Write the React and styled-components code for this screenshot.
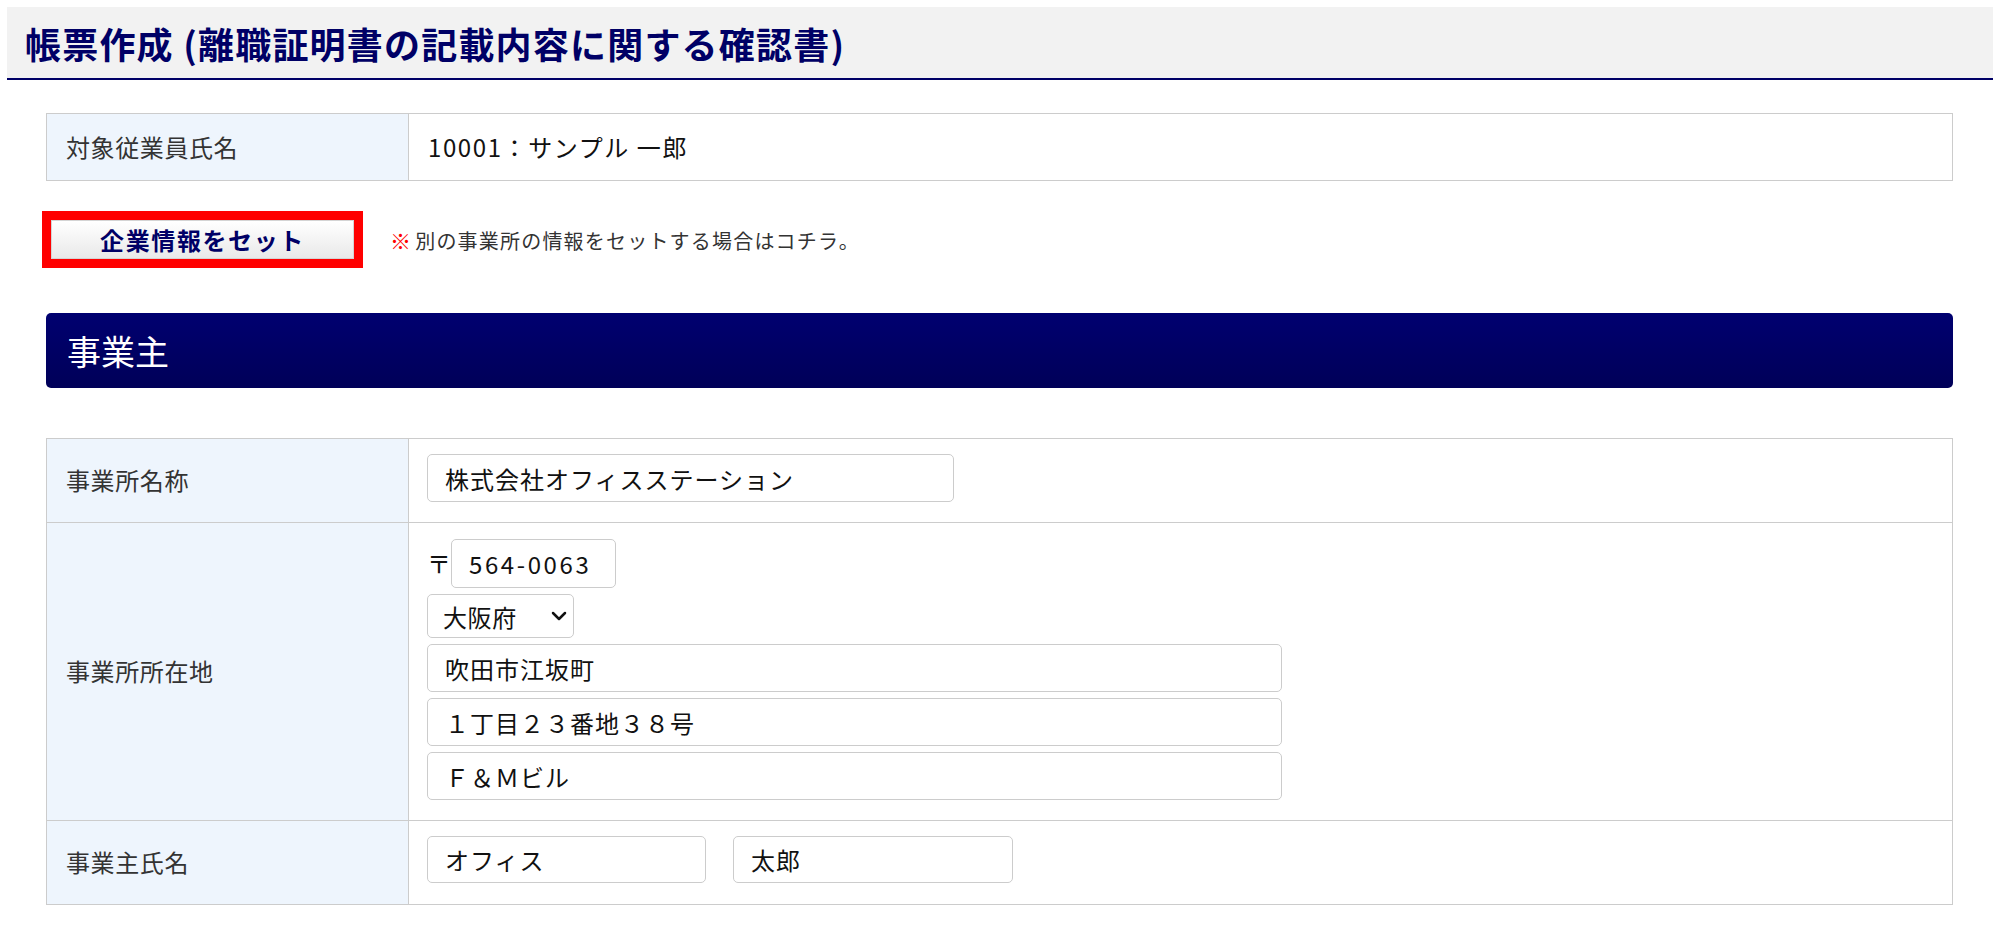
import React from 'react'
import styled, { createGlobalStyle } from 'styled-components'
import { ChevronDown } from 'lucide-react'

const GlobalStyle = createGlobalStyle`
  body {
    margin: 0;
    background: #ffffff;
    font-family: "Noto Sans CJK JP", "Noto Sans", sans-serif;
    color: #333333;
  }
  * {
    box-sizing: border-box;
  }
`;

const Page = styled.div`
  padding: 7px 7px 40px;
`;

const Header = styled.div`
  display: flex;
  align-items: center;
  height: 73px;
  padding-left: 18px;
  background: #f2f2f2;
  border-bottom: 2px solid #000066;
`;

const Title = styled.h1`
  margin: 0;
  font-size: 36px;
  font-weight: 700;
  letter-spacing: 1.2px;
  line-height: 1;
  color: #000066;
`;

const Content = styled.div`
  padding: 0 40px 0 39px;
`;

const FormTable = styled.div`
  margin-top: ${props => props.$top}px;
  border: 1px solid #cccccc;
`;

const Row = styled.div`
  display: grid;
  grid-template-columns: 362px 1fr;
  & + & {
    border-top: 1px solid #cccccc;
  }
`;

const Label = styled.div`
  display: flex;
  align-items: center;
  padding: 0 19px;
  background: #eef5fd;
  border-right: 1px solid #cccccc;
  font-size: 24px;
  letter-spacing: 0.6px;
  line-height: 1.2;
  color: #333333;
`;

const Value = styled.div`
  display: flex;
  flex-direction: column;
  gap: 6px;
  min-height: ${props => props.$min || 0}px;
  padding: ${props => props.$pad || '15px 18px 20px'};
  justify-content: center;
  font-size: 24px;
  letter-spacing: 1.6px;
  line-height: 1.2;
  color: #111111;
`;

const ButtonRow = styled.div`
  display: flex;
  align-items: center;
  gap: 27px;
  margin-top: 30px;
  margin-left: -4px;
`;

const RedFrame = styled.div`
  display: inline-flex;
  border: 9px solid #ff0000;
`;

const SetButton = styled.button`
  width: 303px;
  height: 39px;
  padding: 0;
  border: 1px solid #d4d4d4;
  background: linear-gradient(#ffffff, #e9e9e9);
  font-family: inherit;
  font-size: 24px;
  font-weight: 700;
  letter-spacing: 1.6px;
  color: #000066;
  cursor: pointer;
`;

const Note = styled.span`
  font-size: 20px;
  letter-spacing: 1.2px;
  color: #333333;
`;

const Mark = styled.span`
  color: #ff0000;
  font-weight: 700;
  font-size: 21px;
  margin-right: 3px;
`;

const SectionBar = styled.div`
  display: flex;
  align-items: center;
  height: 75px;
  margin-top: 45px;
  padding-left: 21px;
  border-radius: 5px;
  background: linear-gradient(#000070, #000058);
  font-size: 34px;
  color: #ffffff;
`;

const Line = styled.div`
  display: flex;
  align-items: center;
  gap: ${props => props.$gap || 0}px;
`;

const Postal = styled.span`
  width: 24px;
  font-size: 24px;
  letter-spacing: 0;
  color: #111111;
`;

const TextInput = styled.input`
  width: ${props => props.$w}px;
  height: ${props => props.$h || 48}px;
  padding: 0 17px;
  border: 1px solid #cccccc;
  border-radius: 5px;
  background: #ffffff;
  font-family: inherit;
  font-size: 24px;
  letter-spacing: ${props => props.$ls || 1}px;
  color: #111111;
  outline: none;
`;

const SelectWrap = styled.div`
  position: relative;
  width: 147px;
  height: 44px;
  & svg {
    position: absolute;
    right: 3px;
    top: 10px;
    pointer-events: none;
  }
`;

const Select = styled.select`
  appearance: none;
  width: 100%;
  height: 100%;
  padding: 0 0 0 15px;
  border: 1px solid #cccccc;
  border-radius: 5px;
  background: #ffffff;
  font-family: inherit;
  font-size: 24px;
  letter-spacing: 0.6px;
  color: #111111;
`;

export default function App() {
  return (
    <Page>
      <GlobalStyle />
      <Header>
        <Title>帳票作成 (離職証明書の記載内容に関する確認書)</Title>
      </Header>
      <Content>
        <FormTable $top={33}>
          <Row>
            <Label>対象従業員氏名</Label>
            <Value $min={66} $pad="0 19px">10001：サンプル 一郎</Value>
          </Row>
        </FormTable>

        <ButtonRow>
          <RedFrame>
            <SetButton>企業情報をセット</SetButton>
          </RedFrame>
          <Note><Mark>※</Mark>別の事業所の情報をセットする場合はコチラ。</Note>
        </ButtonRow>

        <SectionBar>事業主</SectionBar>

        <FormTable $top={50}>
          <Row>
            <Label>事業所名称</Label>
            <Value>
              <TextInput $w={527} defaultValue="株式会社オフィスステーション" />
            </Value>
          </Row>
          <Row>
            <Label>事業所所在地</Label>
            <Value $pad="16px 18px 20px">
              <Line>
                <Postal>〒</Postal>
                <TextInput $w={165} $h={49} $ls={2.6} defaultValue="564-0063" />
              </Line>
              <SelectWrap>
                <Select defaultValue="大阪府">
                  <option>北海道</option>
                  <option>東京都</option>
                  <option>大阪府</option>
                </Select>
                <ChevronDown size={24} strokeWidth={2.5} color="#111111" />
              </SelectWrap>
              <TextInput $w={855} defaultValue="吹田市江坂町" />
              <TextInput $w={855} defaultValue="１丁目２３番地３８号" />
              <TextInput $w={855} defaultValue="Ｆ＆Ｍビル" />
            </Value>
          </Row>
          <Row>
            <Label>事業主氏名</Label>
            <Value $pad="15px 18px 21px">
              <Line $gap={27}>
                <TextInput $w={279} $h={47} defaultValue="オフィス" />
                <TextInput $w={280} $h={47} defaultValue="太郎" />
              </Line>
            </Value>
          </Row>
        </FormTable>
      </Content>
    </Page>
  )
}
